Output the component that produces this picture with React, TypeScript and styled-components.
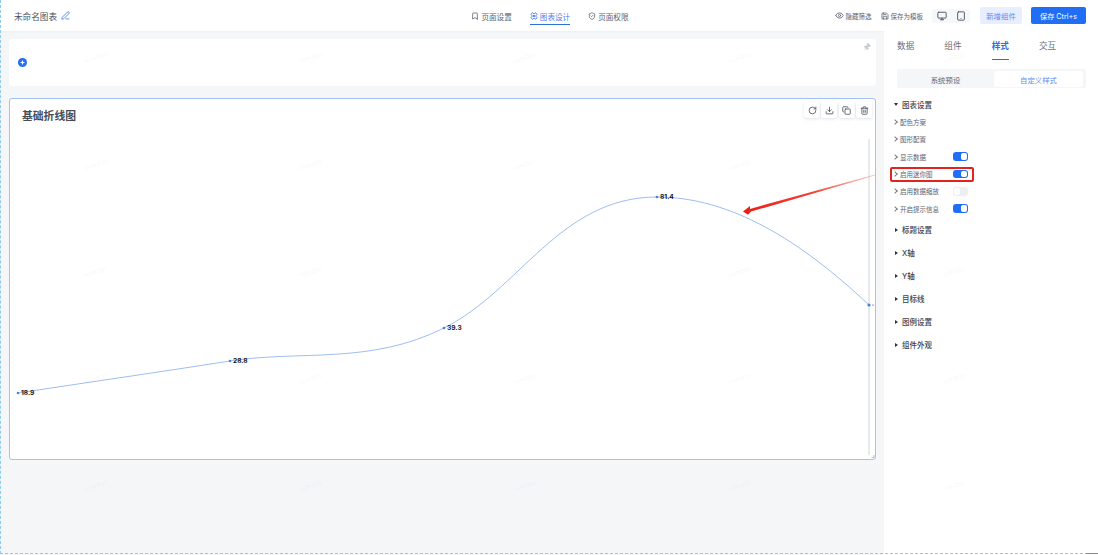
import styled, { createGlobalStyle } from 'styled-components'
import { Bookmark, Copy, Download, Eye, Monitor, PenLine, Pin, RotateCw, Save, ShieldCheck, Tablet, Trash2 } from 'lucide-react'

const GlobalStyle = createGlobalStyle`
    html, body {
        margin: 0;
        padding: 0;
        background: #ffffff;
        font-family: "Inter", "Noto Sans CJK SC", sans-serif;
    }
    * {
        box-sizing: border-box;
    }
`

const Page = styled.div`
    position: relative;
    width: 1098px;
    height: 555px;
    overflow: hidden;
    display: flex;
    flex-direction: column;
    background: #f4f6f8;
`

const Header = styled.header`
    height: 31px;
    flex: none;
    display: grid;
    grid-template-columns: 1fr auto 1fr;
    align-items: center;
    padding: 0 12px 0 14px;
    background: #ffffff;
    box-shadow: 0 1px 2px rgba(30, 50, 90, 0.03);
`

const DocTitle = styled.div`
    display: flex;
    align-items: center;
    gap: 4px;
    font-size: 8.6px;
    color: #4b5160;
    svg {
        color: #3f7ff0;
    }
`

const Nav = styled.nav`
    display: flex;
    align-items: center;
    gap: 18px;
    height: 100%;
`

const NavItem = styled.div<{ $active?: boolean }>`
    display: flex;
    align-items: center;
    gap: 2px;
    height: 16px;
    margin-top: 2px;
    font-size: 7.6px;
    color: ${p => (p.$active ? '#4f80ee' : '#5d6370')};
    border-bottom: 1px solid ${p => (p.$active ? '#2a6fe0' : 'transparent')};
`

const Actions = styled.div`
    display: flex;
    align-items: center;
    justify-content: flex-end;
    gap: 9px;
`

const TextAction = styled.div`
    display: flex;
    align-items: center;
    gap: 2px;
    font-size: 6.5px;
    color: #5d6370;
`

const DeviceGroup = styled.div`
    display: flex;
    align-items: center;
    gap: 9px;
    height: 14px;
    padding: 0 4.5px;
    background: #f6f7f9;
    border-radius: 2px;
    color: #4b5160;
`

const GhostButton = styled.button`
    width: 42px;
    height: 17px;
    margin-left: 1px;
    padding: 0;
    border: 0;
    border-radius: 2px;
    background: #e6eeff;
    color: #5f8cf0;
    font: inherit;
    font-size: 7.4px;
`

const PrimaryButton = styled.button`
    width: 55px;
    height: 17px;
    padding: 0;
    border: 0;
    border-radius: 2px;
    background: #1f6ef5;
    color: #ffffff;
    font: inherit;
    font-size: 7.2px;
`

const Body = styled.div`
    flex: 1;
    min-height: 0;
    display: flex;
`

const Canvas = styled.main`
    flex: 1;
    padding: 8px 8px 0 9px;
    display: flex;
    flex-direction: column;
    gap: 12px;
`

const FilterCard = styled.section`
    position: relative;
    height: 47px;
    display: flex;
    align-items: center;
    padding: 0 9px;
    background: #ffffff;
    border-radius: 3px;
`

const PinMark = styled.div`
    position: absolute;
    top: 4px;
    right: 5px;
    color: #c9ccd2;
    line-height: 0;
    transform: rotate(40deg);
`

const ChartCard = styled.section`
    position: relative;
    height: 362px;
    display: flex;
    flex-direction: column;
    background: #ffffff;
    border: 1px solid #a3c2ec;
    border-radius: 3px;
`

const ChartTitle = styled.h2`
    height: 32px;
    flex: none;
    margin: 0;
    padding: 10px 0 0 12px;
    font-size: 10.8px;
    line-height: 15px;
    font-weight: 600;
    color: #484c56;
`

const ChartToolbar = styled.div`
    position: absolute;
    top: 3px;
    right: 3px;
    display: flex;
    gap: 1.3px;
`

const ToolButton = styled.div`
    width: 16px;
    height: 16px;
    display: flex;
    align-items: center;
    justify-content: center;
    background: #ffffff;
    border-radius: 2px;
    color: #4b5160;
    box-shadow: 0 1px 3px rgba(30, 50, 90, 0.14);
`

const ChartSvg = styled.svg`
    display: block;
    width: 865px;
    height: 328px;
`

const PointLabel = styled.text`
    font-size: 6.6px;
    font-weight: 700;
    fill: #14171c;
`

const Panel = styled.aside`
    width: 214px;
    flex: none;
    display: flex;
    flex-direction: column;
    padding: 0 12px 0 13px;
    background: #ffffff;
`

const PanelTabs = styled.div`
    height: 38px;
    display: flex;
    gap: 30px;
`

const PanelTab = styled.div<{ $active?: boolean }>`
    width: 17.3px;
    padding-top: 9px;
    text-align: center;
    white-space: nowrap;
    font-size: 8.6px;
    line-height: 12px;
    font-weight: ${p => (p.$active ? 600 : 400)};
    color: ${p => (p.$active ? '#2a6fe0' : '#6b707c')};
    &::after {
        content: '';
        display: ${p => (p.$active ? 'block' : 'none')};
        width: 17px;
        height: 1.2px;
        margin: 7px auto 0;
        background: #2a6fe0;
    }
`

const Segments = styled.div`
    display: grid;
    grid-template-columns: 97px 89px;
    height: 19px;
    width: 189px;
    padding: 2px 3px 1px 0;
    background: #f4f6f8;
    border-radius: 2px;
`

const Segment = styled.div<{ $active?: boolean }>`
    display: flex;
    align-items: center;
    justify-content: center;
    font-size: 7.4px;
    border-radius: 2px;
    color: ${p => (p.$active ? '#5f8cf0' : '#5d6370')};
    background: ${p => (p.$active ? '#ffffff' : 'transparent')};
`

const Tree = styled.div`
    margin-left: -3px;
    padding-top: 6.5px;
`

const SectionHead = styled.div<{ $open?: boolean }>`
    height: ${p => (p.$open ? '19px' : '23px')};
    display: flex;
    align-items: center;
    gap: 4px;
    font-size: 7.5px;
    font-weight: 500;
    color: #3c414c;
`

const Caret = styled.span<{ $open?: boolean }>`
    width: 0;
    height: 0;
    border-style: solid;
    ${p => (p.$open
        ? 'border-width: 3px 2px 0 2px; border-color: #30343c transparent transparent transparent;'
        : 'border-width: 2px 0 2px 3px; margin-left: 1px; border-color: transparent transparent transparent #30343c;')}
`

const ItemList = styled.div`
    margin-bottom: 1px;
`

const Item = styled.div`
    width: 74px;
    height: 17.3px;
    display: flex;
    align-items: center;
    justify-content: space-between;
    font-size: 6.5px;
    color: #5d6370;
`

const ItemLabel = styled.span`
    display: flex;
    align-items: center;
    gap: 3px;
`

const Chevron = styled.span`
    width: 4px;
    height: 4px;
    margin-left: -1px;
    border-top: 0.7px solid #777c87;
    border-right: 0.7px solid #777c87;
    transform: rotate(45deg);
`

const Switch = styled.span<{ $on?: boolean }>`
    position: relative;
    width: 15px;
    height: 8.5px;
    border-radius: 3px;
    background: ${p => (p.$on ? '#1f6ef5' : '#eceef1')};
    &::after {
        content: '';
        position: absolute;
        top: 1px;
        left: ${p => (p.$on ? '8px' : '1px')};
        width: 6px;
        height: 6.5px;
        border-radius: 2px;
        background: #ffffff;
    }
`

const RedBox = styled.div`
    position: absolute;
    left: 890px;
    top: 167px;
    width: 84px;
    height: 15px;
    border: 2px solid #e3231d;
    border-radius: 2px;
    pointer-events: none;
`

const ArrowLayer = styled.svg`
    position: absolute;
    left: 0;
    top: 0;
    width: 1098px;
    height: 555px;
    pointer-events: none;
`

const Watermarks = styled.div`
    position: absolute;
    left: -12px;
    top: 4px;
    display: grid;
    grid-template-columns: repeat(5, 214.5px);
    grid-auto-rows: 107px;
    pointer-events: none;
`

const Watermark = styled.span`
    align-self: center;
    justify-self: center;
    font-size: 6px;
    color: rgba(60, 70, 90, 0.08);
    transform: rotate(-15deg);
`

const PageEdge = styled.div`
    position: absolute;
    left: 0;
    top: 0;
    right: 0;
    bottom: 1px;
    border-left: 1px dashed #8ccbf2;
    border-bottom: 1px dashed #8ccbf2;
    pointer-events: none;
`

const EdgeTick = styled.div`
    position: absolute;
    right: 0;
    bottom: 1px;
    width: 12px;
    height: 1px;
    background: #2aa5f5;
`

const chartSettings = [
    { label: '配色方案' },
    { label: '图形配置' },
    { label: '显示数据', on: true },
    { label: '启用迷你图', on: true },
    { label: '启用数据缩放', on: false },
    { label: '开启提示信息', on: true },
]

const closedSections = ['标题设置', 'X轴', 'Y轴', '目标线', '图例设置', '组件外观']

const points = [
    { x: 18, y: 393, label: '18.9' },
    { x: 230, y: 361, label: '28.8' },
    { x: 444, y: 328, label: '39.3' },
    { x: 657, y: 197, label: '81.4' },
]

function DesignIcon() {
    return <svg width="8" height="8" viewBox="0 0 24 24" fill="none" stroke="currentColor" strokeWidth="2.8" strokeLinejoin="round">
        <path d="M7 2l5 4 5-4 4 5-4 5 4 5-4 5-5-4-5 4-4-5 4-5-4-5z" />
        <path d="M9 12l3-3 3 3-3 3z" />
    </svg>
}

function PlusBadge() {
    return <svg width="9" height="9" viewBox="0 0 18 18">
        <circle cx="9" cy="9" r="9" fill="#1f6ef5" />
        <path d="M9 5v8M5 9h8" stroke="#ffffff" strokeWidth="2.4" />
    </svg>
}

export default function App() {
    return <Page>
        <GlobalStyle />
        <Header>
            <DocTitle>
                未命名图表
                <PenLine size={9} strokeWidth={2.2} />
            </DocTitle>
            <Nav>
                <NavItem><Bookmark size={8} strokeWidth={2.4} />页面设置</NavItem>
                <NavItem $active><DesignIcon />图表设计</NavItem>
                <NavItem><ShieldCheck size={8} strokeWidth={2.4} />页面权限</NavItem>
            </Nav>
            <Actions>
                <TextAction><Eye size={9} strokeWidth={2.2} />隐藏筛选</TextAction>
                <TextAction><Save size={8} strokeWidth={2.4} />保存为模板</TextAction>
                <DeviceGroup>
                    <Monitor size={10} strokeWidth={2.2} />
                    <Tablet size={10} strokeWidth={2.2} />
                </DeviceGroup>
                <GhostButton>新增组件</GhostButton>
                <PrimaryButton>保存 Ctrl+s</PrimaryButton>
            </Actions>
        </Header>
        <Body>
            <Canvas>
                <FilterCard>
                    <PlusBadge />
                    <PinMark><Pin size={8} fill="currentColor" /></PinMark>
                </FilterCard>
                <ChartCard>
                    <ChartTitle>基础折线图</ChartTitle>
                    <ChartToolbar>
                        <ToolButton><RotateCw size={9} strokeWidth={2.2} /></ToolButton>
                        <ToolButton><Download size={9} strokeWidth={2.2} /></ToolButton>
                        <ToolButton><Copy size={9} strokeWidth={2.2} /></ToolButton>
                        <ToolButton><Trash2 size={9} strokeWidth={2.2} /></ToolButton>
                    </ChartToolbar>
                    <ChartSvg viewBox="10 131 865 328">
                        <line x1="869" y1="139" x2="869" y2="455" stroke="#c6c9cf" strokeWidth="0.8" />
                        <path
                            d="M18 393 C90 382 160 372 230 361 C300 350 370 365 444 328 C520 290 560 197 657 197 C730 197 800 240 869 305"
                            fill="none"
                            stroke="#86aceb"
                            strokeWidth="0.8"
                        />
                        {points.map(p => <g key={p.label}>
                            <circle cx={p.x} cy={p.y} r="1.3" fill="#4a80d8" />
                            <PointLabel x={p.x + 3} y={p.y + 2.4}>{p.label}</PointLabel>
                        </g>)}
                        <circle cx="869" cy="305" r="1.6" fill="#4a80d8" />
                        <circle cx="873" cy="305" r="0.6" fill="#22262e" />
                        <path d="M871.5 457.5h2.5v-2.5" fill="none" stroke="#8a8f99" strokeWidth="0.6" />
                    </ChartSvg>
                </ChartCard>
            </Canvas>
            <Panel>
                <PanelTabs>
                    <PanelTab>数据</PanelTab>
                    <PanelTab>组件</PanelTab>
                    <PanelTab $active>样式</PanelTab>
                    <PanelTab>交互</PanelTab>
                </PanelTabs>
                <Segments>
                    <Segment>系统预设</Segment>
                    <Segment $active>自定义样式</Segment>
                </Segments>
                <Tree>
                    <SectionHead $open><Caret $open />图表设置</SectionHead>
                    <ItemList>
                        {chartSettings.map(s => <Item key={s.label}>
                            <ItemLabel><Chevron />{s.label}</ItemLabel>
                            {s.on !== undefined && <Switch $on={s.on} />}
                        </Item>)}
                    </ItemList>
                    {closedSections.map(s => <SectionHead key={s}><Caret />{s}</SectionHead>)}
                </Tree>
            </Panel>
        </Body>
        <Watermarks>
            {Array.from({ length: 25 }, (_, i) => <Watermark key={i}>user001</Watermark>)}
        </Watermarks>
        <RedBox />
        <ArrowLayer viewBox="0 0 1098 555">
            <defs>
                <linearGradient id="arrowFade" x1="875" y1="175" x2="743" y2="211" gradientUnits="userSpaceOnUse">
                    <stop offset="0" stopColor="#f4a7a0" stopOpacity="0.6" />
                    <stop offset="0.45" stopColor="#f0453a" />
                    <stop offset="1" stopColor="#ee1c12" />
                </linearGradient>
            </defs>
            <path d="M875 174.6 L750 208.9 L750 206 L743 211.5 L748 214.8 L751 211.6 L875 175.4 Z" fill="url(#arrowFade)" />
        </ArrowLayer>
        <PageEdge />
        <EdgeTick />
    </Page>
}
